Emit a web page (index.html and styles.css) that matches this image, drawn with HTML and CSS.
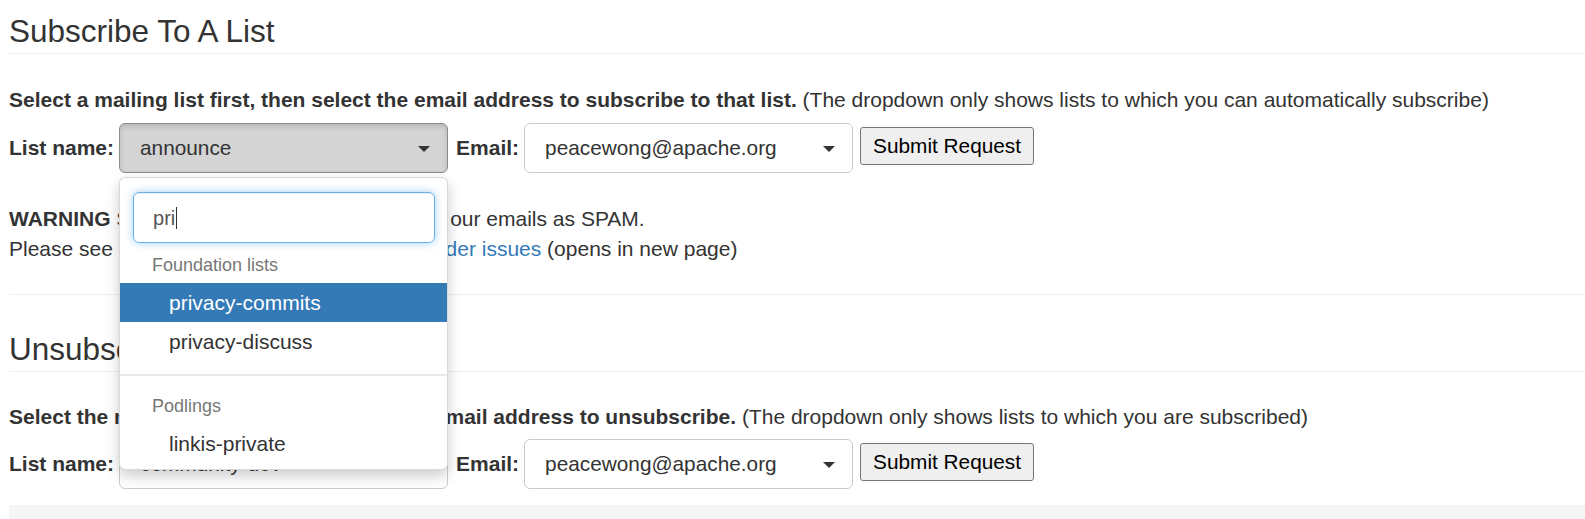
FILE: index.html
```html
<!DOCTYPE html>
<html lang="en">
<head>
<meta charset="utf-8">
<title>Subscribe To A List</title>
<link rel="stylesheet" href="styles.css">
</head>
<body>
<div class="page">
  <section class="panel">
    <h3 class="title">Subscribe To A List</h3>
    <p class="intro"><strong>Select a mailing list first, then select the email address to subscribe to that list.</strong> (The dropdown only shows lists to which you can automatically subscribe)</p>
    <form class="row">
      <label class="lbl">List name:</label>
      <div class="picker">
        <button type="button" class="pick-btn pick-open"><span class="pick-text">announce</span><span class="caret"></span></button>
        <div class="menu">
          <div class="searchbox">
            <div class="search">pri<span class="cursor"></span></div>
          </div>
          <ul class="results">
            <li class="group-head">Foundation lists</li>
            <li class="opt opt-active">privacy-commits</li>
            <li class="opt">privacy-discuss</li>
            <li class="divider"></li>
            <li class="group-head">Podlings</li>
            <li class="opt">linkis-private</li>
          </ul>
        </div>
      </div>
      <label class="lbl lbl-email">Email:</label>
      <div class="picker">
        <button type="button" class="pick-btn"><span class="pick-text">peacewong@apache.org</span><span class="caret"></span></button>
      </div>
      <button type="button" class="submit">Submit Request</button>
    </form>
    <p class="warn"><strong>WARNING</strong> Some providers are known to block our emails as SPAM.<br>Please see the following for details: <a class="link" href="#">email provider issues</a> (opens in new page)</p>
  </section>
  <hr class="sep">
  <section class="panel">
    <h3 class="title title-second">Unsubscribe From A List</h3>
    <p class="intro intro-second"><strong>Select the mailing list first, then select the email address to unsubscribe.</strong> (The dropdown only shows lists to which you are subscribed)</p>
    <form class="row row-second">
      <label class="lbl">List name:</label>
      <div class="picker">
        <button type="button" class="pick-btn"><span class="pick-text">community-dev</span><span class="caret"></span></button>
      </div>
      <label class="lbl lbl-email">Email:</label>
      <div class="picker">
        <button type="button" class="pick-btn"><span class="pick-text">peacewong@apache.org</span><span class="caret"></span></button>
      </div>
      <button type="button" class="submit">Submit Request</button>
    </form>
  </section>
  <div class="well"></div>
</div>
</body>
</html>
```
FILE: styles.css
```css
html, body {
  margin: 0;
  padding: 0;
  background: #fff;
}
body {
  font-family: "Liberation Sans", Arial, Helvetica, sans-serif;
  font-size: 21px;
  line-height: 30px;
  color: #333;
}
.page {
  padding-left: 9px;
}
.title {
  margin: 0;
  padding: 15px 0 5px;
  font-size: 31.5px;
  line-height: 33px;
  font-weight: 400;
  color: #333;
  border-bottom: 1px solid #eee;
}
.title-second {
  margin-top: 23px;
}
.intro {
  margin: 31px 0 0;
}
.intro-second {
  margin-top: 30px;
}
.row {
  display: flex;
  align-items: center;
  margin: 8px 0 0;
  height: 50px;
}
.row-second {
  margin-top: 7px;
}
.lbl {
  font-weight: 700;
  margin-right: 5px;
}
.lbl-email {
  margin-left: 8px;
}
.picker {
  position: relative;
  width: 329px;
  height: 50px;
}
.pick-btn {
  box-sizing: border-box;
  width: 100%;
  height: 50px;
  display: flex;
  align-items: center;
  justify-content: space-between;
  padding: 0 17px 0 20px;
  font-family: "Liberation Sans", Arial, Helvetica, sans-serif;
  font-size: 20.8px;
  color: #333;
  background: #fff;
  border: 1px solid #ccc;
  border-radius: 6px;
  text-align: left;
}
.pick-open {
  background: #d4d4d4;
  border-color: #8c8c8c;
  box-shadow: inset 0 3px 5px rgba(0, 0, 0, 0.125);
}
.caret {
  width: 0;
  height: 0;
  border-top: 6px solid #333;
  border-left: 6px solid transparent;
  border-right: 6px solid transparent;
  margin-top: 1px;
}
.submit {
  align-self: flex-start;
  margin: 4px 0 0 7px;
  height: 38px;
  padding: 0 12px;
  font-family: "Liberation Sans", Arial, Helvetica, sans-serif;
  font-size: 20.8px;
  color: #000;
  background: #efefef;
  border: 1px solid #767676;
  border-radius: 3px;
}
.menu {
  position: absolute;
  z-index: 10;
  top: 100%;
  left: 0;
  margin-top: 4px;
  box-sizing: border-box;
  width: 329px;
  background: #fff;
  border: 1px solid rgba(0, 0, 0, 0.15);
  border-radius: 6px;
  box-shadow: 0 6px 14px rgba(0, 0, 0, 0.2);
  overflow: hidden;
}
.searchbox {
  padding: 14px 12px 4px 13px;
}
.search {
  box-sizing: border-box;
  height: 51px;
  display: flex;
  align-items: center;
  padding-left: 19px;
  font-size: 20px;
  color: #555;
  border: 1px solid #66afe9;
  border-radius: 6px;
  box-shadow: inset 0 1px 1px rgba(0, 0, 0, 0.075), 0 0 8px rgba(102, 175, 233, 0.6);
}
.cursor {
  display: inline-block;
  width: 1px;
  height: 22px;
  background: #333;
  margin-left: 1px;
}
.results {
  list-style: none;
  margin: 0;
  padding: 0 0 6px;
}
.group-head {
  padding-left: 32px;
  font-size: 18px;
  line-height: 36px;
  color: #777;
}
.opt {
  padding-left: 49px;
  font-size: 21px;
  line-height: 39px;
  color: #333;
}
.opt-active {
  background: #337ab7;
  color: #fff;
}
.divider {
  height: 2px;
  margin: 13px 0 12px;
  background: #e8e8e8;
}
.warn {
  margin: 31px 0 0;
}
.link {
  color: #337ab7;
  text-decoration: none;
}
.sep {
  margin: 30px 0 0;
  border: 0;
  border-top: 1px solid #eee;
  height: 0;
}
.well {
  margin-top: 16px;
  height: 60px;
  background: #f5f5f5;
}
```
